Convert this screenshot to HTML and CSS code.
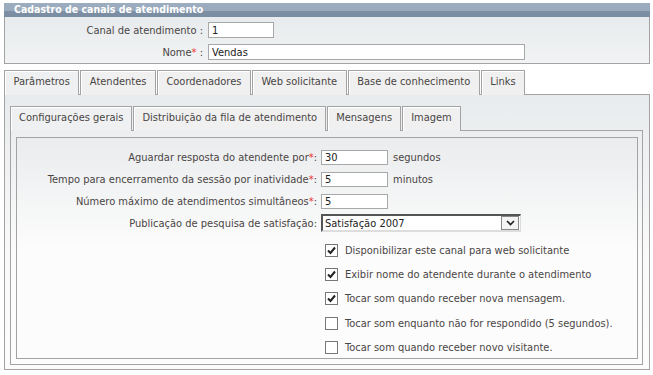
FILE: index.html
```html
<!DOCTYPE html>
<html lang="pt-BR">
<head>
  <meta charset="UTF-8">
  <title>Cadastro de canais de atendimento</title>
  <link rel="stylesheet" href="styles.css">
</head>
<body>

  <!-- Cabeçalho -->
  <div class="box-title">Cadastro de canais de atendimento</div>
  <div class="box">
    <div class="field-row">
      <label class="label">Canal de atendimento :</label>
      <input class="text short" type="text" value="1">
    </div>
    <div class="field-row">
      <label class="label">Nome<span class="req">*</span> :</label>
      <input class="text long" type="text" value="Vendas">
    </div>
  </div>

  <!-- Abas principais -->
  <div class="tabs">
    <div class="tab active">Parâmetros</div>
    <div class="tab">Atendentes</div>
    <div class="tab">Coordenadores</div>
    <div class="tab">Web solicitante</div>
    <div class="tab">Base de conhecimento</div>
    <div class="tab">Links</div>
  </div>
  <div class="tab-panel">

    <div class="tabs sub">
      <div class="tab active">Configurações gerais</div>
      <div class="tab">Distribuição da fila de atendimento</div>
      <div class="tab">Mensagens</div>
      <div class="tab">Imagem</div>
    </div>
    <div class="sub-panel">
      <div class="form-box">
        <div class="form-row">
          <label class="label">Aguardar resposta do atendente por<span class="req">*</span>:</label>
          <div class="control"><input class="text num" type="text" value="30"><span class="unit">segundos</span></div>
        </div>
        <div class="form-row">
          <label class="label">Tempo para encerramento da sessão por inatividade<span class="req">*</span>:</label>
          <div class="control"><input class="text num" type="text" value="5"><span class="unit">minutos</span></div>
        </div>
        <div class="form-row">
          <label class="label">Número máximo de atendimentos simultâneos<span class="req">*</span>:</label>
          <div class="control"><input class="text num" type="text" value="5"></div>
        </div>
        <div class="form-row">
          <label class="label">Publicação de pesquisa de satisfação:</label>
          <div class="control">
            <div class="select">
              <span class="select-value">Satisfação 2007</span>
              <span class="select-btn">
                <svg width="9" height="6" viewBox="0 0 9 6"><path d="M1 1 L4.5 4.5 L8 1" fill="none" stroke="#222" stroke-width="1.6"/></svg>
              </span>
            </div>
          </div>
        </div>

        <div class="checks">
          <div class="check-row"><span class="check on"><svg width="11" height="11" viewBox="0 0 11 11"><path d="M2 5.5 L4.5 8 L9 2.5" fill="none" stroke="#222" stroke-width="2"/></svg></span>Disponibilizar este canal para web solicitante</div>
          <div class="check-row"><span class="check on"><svg width="11" height="11" viewBox="0 0 11 11"><path d="M2 5.5 L4.5 8 L9 2.5" fill="none" stroke="#222" stroke-width="2"/></svg></span>Exibir nome do atendente durante o atendimento</div>
          <div class="check-row"><span class="check on"><svg width="11" height="11" viewBox="0 0 11 11"><path d="M2 5.5 L4.5 8 L9 2.5" fill="none" stroke="#222" stroke-width="2"/></svg></span>Tocar som quando receber nova mensagem.</div>
          <div class="check-row"><span class="check"></span>Tocar som enquanto não for respondido (5 segundos).</div>
          <div class="check-row"><span class="check"></span>Tocar som quando receber novo visitante.</div>
        </div>
      </div>
    </div>

  </div>

</body>
</html>
```

FILE: styles.css
```css
/* Base */
* {
  margin: 0;
  padding: 0;
  box-sizing: border-box;
}

body {
  font-family: 'DejaVu Sans Condensed', 'DejaVu Sans', sans-serif;
  font-size: 11px;
  color: #4a4545;
  background: #fff;
  padding: 3px 3px 0 4px;
}

.req {
  color: #e8302b;
}

/* Caixa de cadastro */
.box-title {
  height: 14px;
  line-height: 13px;
  padding-left: 10px;
  color: #fff;
  font-size: 10.5px;
  font-weight: bold;
  background: linear-gradient(#9cadbf 0, #9aaabc 57%, #7d8fa5 57%, #7a8ca2 100%);
}

.box {
  height: 47px;
  border: 1px solid #a3a3a3;
  border-top: none;
  background: linear-gradient(#e8ebed, #f1f3f4);
  padding-top: 5px;
}

.field-row {
  display: grid;
  grid-template-columns: 198px 1fr;
  column-gap: 5px;
  align-items: center;
  margin-bottom: 6px;
}

.label {
  text-align: right;
  white-space: nowrap;
}

.text {
  font: inherit;
  color: #222;
  height: 16px;
  border: 1px solid #a8a8a8;
  background: #fff;
  padding: 0 3px;
  outline: none;
}

.text.short { width: 66px; }
.text.long { width: 317px; }
.text.num { width: 67px; height: 15px; }

/* Abas */
.tabs {
  display: flex;
  margin-top: 6px;
}

.tab {
  height: 25px;
  line-height: 22px;
  padding: 0 8.5px;
  margin-right: 1px;
  border: 1px solid #a3a3a3;
  border-bottom: none;
  background: #f0f0f0;
  position: relative;
  box-shadow: inset 1px 1px 0 #fff;
  white-space: nowrap;
}

.tab.active {
  background: #eef0f1;
  z-index: 1;
}

.tab-panel {
  height: 276px;
  margin-top: -1px;
  border: 1px solid #a3a3a3;
  background: linear-gradient(#e8ebed, #fafafa 60%, #fcfcfc);
  padding: 11px 6px 4px 5px;
}

.tabs.sub {
  margin-top: 0;
}

.tabs.sub .tab {
  padding: 0 8px;
  margin-right: 1px;
}

.sub-panel {
  height: 235px;
  margin-top: -1px;
  border: 1px solid #a3a3a3;
  background: linear-gradient(#eceeef, #fcfcfc 55%);
  padding: 6px 4px 5px 5px;
}

.form-box {
  height: 222px;
  border: 1px solid #a3a3a3;
  background: linear-gradient(#eaeced, #fcfcfc 50%);
  padding-top: 8px;
}

.form-row {
  display: grid;
  grid-template-columns: 300px 1fr;
  column-gap: 4px;
  align-items: center;
  height: 22px;
}

.control {
  display: flex;
  align-items: center;
}

.unit {
  margin-left: 5px;
}

/* Select */
.select {
  width: 200px;
  height: 18px;
  display: flex;
  align-items: center;
  justify-content: space-between;
  background: #fff;
  border-top: 2px solid #555;
  border-left: 2px solid #555;
  border-right: 1px solid #ddd;
  border-bottom: 2px solid #ddd;
  color: #222;
  padding-left: 2px;
}

.select-btn {
  width: 18px;
  height: 14px;
  border: 1px solid #888;
  background: #f4f4f4;
  display: flex;
  align-items: center;
  justify-content: center;
  margin-right: 1px;
}

/* Checkboxes */
.checks {
  margin-top: 4px;
  padding-left: 308px;
}

.check-row {
  display: flex;
  align-items: center;
  height: 24.4px;
}

.check {
  width: 13px;
  height: 13px;
  border: 1px solid #777;
  background: #fff;
  margin-right: 7px;
  display: flex;
  align-items: center;
  justify-content: center;
}
```
